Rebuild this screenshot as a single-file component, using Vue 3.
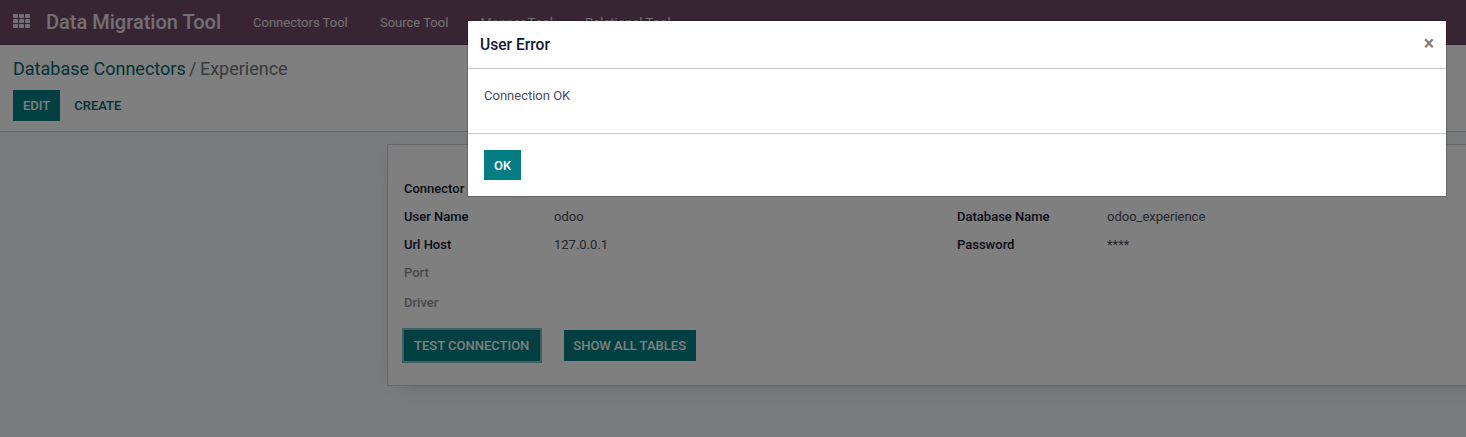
<script setup>
const menus = ['Connectors Tool', 'Source Tool', 'Mapper Tool', 'Relational Tool']
const left = [
  { label: 'Connector Name', value: '' },
  { label: 'User Name', value: 'odoo' },
  { label: 'Url Host', value: '127.0.0.1' },
  { label: 'Port', value: '', empty: true },
  { label: 'Driver', value: '', empty: true, tall: true },
]
const right = [
  { label: '', value: '' },
  { label: 'Database Name', value: 'odoo_experience' },
  { label: 'Password', value: '****' },
]
</script>

<template>
  <div class="app">
    <header class="navbar">
      <svg class="apps" width="17" height="14" viewBox="0 0 17 14" fill="currentColor">
        <template v-for="r in 3" :key="r">
          <rect v-for="c in 3" :key="c" :x="(c - 1) * 6" :y="(r - 1) * 5" width="5" height="4" rx=".7" />
        </template>
      </svg>
      <span class="brand">Data Migration Tool</span>
      <nav class="menus">
        <a v-for="m in menus" :key="m">{{ m }}</a>
      </nav>
    </header>

    <section class="control-panel">
      <div class="breadcrumb"><a>Database Connectors</a><span class="sep">/</span><span>Experience</span></div>
      <div class="actions">
        <button class="btn primary">Edit</button>
        <button class="btn link">Create</button>
      </div>
    </section>

    <main class="content">
      <div class="sheet">
        <div class="groups">
          <div class="group">
            <div v-for="f in left" :key="f.label" class="field" :class="{ empty: f.empty, tall: f.tall }">
              <label>{{ f.label }}</label><span>{{ f.value }}</span>
            </div>
          </div>
          <div class="group">
            <div v-for="f in right" :key="f.label" class="field">
              <label>{{ f.label }}</label><span>{{ f.value }}</span>
            </div>
          </div>
        </div>
        <div class="sheet-actions">
          <button class="btn primary focused">Test Connection</button>
          <button class="btn primary">Show All Tables</button>
        </div>
      </div>
    </main>

    <div class="backdrop">
      <div class="modal">
        <header class="modal-header">
          <h4>User Error</h4>
          <button class="close">×</button>
        </header>
        <div class="modal-body">Connection OK</div>
        <footer class="modal-footer"><button class="btn primary ok">Ok</button></footer>
      </div>
    </div>
  </div>
</template>

<style>
html, body { margin: 0; overflow: hidden; }
</style>

<style scoped>
* { box-sizing: border-box; }
.app {
  position: relative;
  display: flex;
  flex-direction: column;
  height: 437px;
  overflow: hidden;
  font: 400 13px/20px Roboto, sans-serif;
  color: #4c4c5c;
  background: #f4f6fa;
}
.navbar {
  display: flex;
  align-items: center;
  flex: none;
  height: 45px;
  padding-left: 13px;
  background: #714b67;
  border-bottom: 1px solid #5a3c52;
  color: #e5e0e4;
}
.apps { flex: none; margin-top: -2px; }
.brand { margin-left: 16px; font-size: 20px; font-weight: 500; white-space: nowrap; }
.menus { display: flex; gap: 32.2px; margin: 2px 0 0 32px; white-space: nowrap; }
.control-panel {
  flex: none;
  height: 87px;
  padding: 10px 13px 0;
  background: #fff;
  border-bottom: 1px solid #c9ccd2;
}
.breadcrumb { font-size: 18px; line-height: 27px; color: #6c757d; white-space: nowrap; }
.breadcrumb a { color: #01666b; }
.sep { padding: 0 3.5px 0 3.3px; }
.actions { display: flex; gap: 4px; margin-top: 8px; }
.btn {
  height: 31px;
  padding: 0 10px;
  border: 0;
  border-radius: 0;
  font: 500 13px/31px Roboto, sans-serif;
  text-transform: uppercase;
  white-space: nowrap;
}
.primary { color: #fff; background: #017e84; }
.link { color: #01666b; background: transparent; }
.focused { box-shadow: 0 0 0 2px rgba(1, 126, 132, .5); }
.content { flex: 1; padding: 12px 0 0 387px; }
.sheet {
  width: 1140px;
  height: 242px;
  padding: 30px 16px 0;
  background: #fff;
  border: 1px solid #c8c8d3;
  box-shadow: 0 5px 20px -15px rgba(0, 0, 0, .5);
}
.groups { display: grid; grid-template-columns: 553px 553px; }
.field { display: grid; grid-template-columns: 150px 1fr; height: 28px; padding-top: 4px; }
.field label { font-weight: 500; color: #111630; white-space: nowrap; }
.field.empty label { color: #8f9096; }
.field.tall { height: 32px; padding-top: 6px; }
.sheet-actions { display: flex; gap: 24px; margin-top: 11px; }
.sheet-actions .btn { padding: 0 0 0 9.6px; text-align: left; }
.sheet-actions .focused { width: 136.3px; padding-left: 10px; }
.sheet-actions .btn:last-child { width: 132px; padding-left: 9px; }
.backdrop { position: absolute; inset: 0; background: rgba(0, 0, 0, .5); }
.modal {
  width: 980px;
  margin: 20px 0 0 467px;
  background: #fff;
  background-clip: padding-box;
  border: 1px solid rgba(0, 0, 0, .2);
}
.modal-header {
  display: flex;
  align-items: center;
  justify-content: space-between;
  height: 48px;
  padding: 0 12px;
  border-bottom: 1px solid #c8c8d3;
}
.modal-header h4 { margin: 0; font-size: 15.6px; font-weight: 500; color: #111630; }
.close { margin-top: -1px; padding: 0; border: 0; background: none; color: #7f7f7f; font: 700 19.5px/20px Roboto, sans-serif; }
.modal-body { height: 65px; padding: 17px 16px 0; border-bottom: 1px solid #c8c8d3; }
.modal-footer { height: 62px; padding: 16px; }
.ok { display: block; height: 30px; line-height: 31px; }
</style>
